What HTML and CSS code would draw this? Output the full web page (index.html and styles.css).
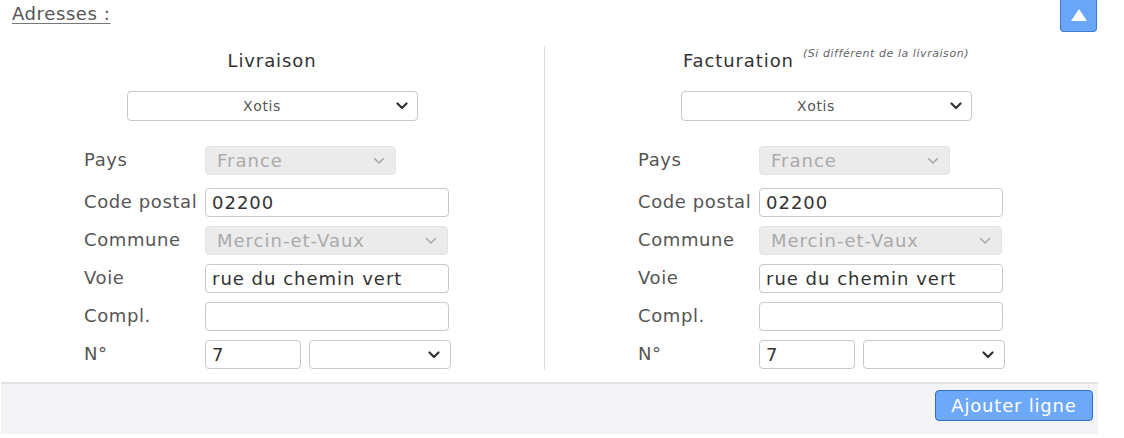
FILE: index.html
```html
<!DOCTYPE html>
<html lang="fr">
<head>
<meta charset="utf-8">
<title>Adresses</title>
<link rel="stylesheet" href="styles.css">
</head>
<body>
<div class="panel">
  <div class="head">
    <span class="head-title">Adresses :</span>
    <button class="toggle" type="button" aria-label="Replier"><span class="tri"></span></button>
  </div>
  <div class="cols">
    <div class="col">
      <div class="col-title"><span class="t">Livraison</span></div>
      <div class="picker"><span class="picker-val">Xotis</span><svg class="chev" viewBox="0 0 12 8"><path d="M1.5 1.5 L6 6 L10.5 1.5" /></svg></div>
      <div class="form">
        <div class="row"><span class="lbl">Pays</span><div class="sel dis w-pays"><span>France</span><svg class="chev light" viewBox="0 0 12 8"><path d="M1.5 1.5 L6 6 L10.5 1.5" /></svg></div></div>
        <div class="row"><span class="lbl">Code postal</span><div class="inp">02200</div></div>
        <div class="row"><span class="lbl">Commune</span><div class="sel dis w-full"><span>Mercin-et-Vaux</span><svg class="chev light" viewBox="0 0 12 8"><path d="M1.5 1.5 L6 6 L10.5 1.5" /></svg></div></div>
        <div class="row"><span class="lbl">Voie</span><div class="inp">rue du chemin vert</div></div>
        <div class="row"><span class="lbl">Compl.</span><div class="inp"></div></div>
        <div class="row"><span class="lbl">N°</span><div class="pair"><div class="inp num">7</div><div class="sel sfx"><span></span><svg class="chev" viewBox="0 0 12 8"><path d="M1.5 1.5 L6 6 L10.5 1.5" /></svg></div></div></div>
      </div>
    </div>
    <div class="col right">
      <div class="col-title"><span class="t">Facturation</span><span class="note">(Si différent de la livraison)</span></div>
      <div class="picker"><span class="picker-val">Xotis</span><svg class="chev" viewBox="0 0 12 8"><path d="M1.5 1.5 L6 6 L10.5 1.5" /></svg></div>
      <div class="form">
        <div class="row"><span class="lbl">Pays</span><div class="sel dis w-pays"><span>France</span><svg class="chev light" viewBox="0 0 12 8"><path d="M1.5 1.5 L6 6 L10.5 1.5" /></svg></div></div>
        <div class="row"><span class="lbl">Code postal</span><div class="inp">02200</div></div>
        <div class="row"><span class="lbl">Commune</span><div class="sel dis w-full"><span>Mercin-et-Vaux</span><svg class="chev light" viewBox="0 0 12 8"><path d="M1.5 1.5 L6 6 L10.5 1.5" /></svg></div></div>
        <div class="row"><span class="lbl">Voie</span><div class="inp">rue du chemin vert</div></div>
        <div class="row"><span class="lbl">Compl.</span><div class="inp"></div></div>
        <div class="row"><span class="lbl">N°</span><div class="pair"><div class="inp num">7</div><div class="sel sfx"><span></span><svg class="chev" viewBox="0 0 12 8"><path d="M1.5 1.5 L6 6 L10.5 1.5" /></svg></div></div></div>
      </div>
    </div>
  </div>
  <div class="foot">
    <button class="add" type="button">Ajouter ligne</button>
  </div>
</div>
</body>
</html>
```

FILE: styles.css
```css
* { box-sizing: border-box; }
html, body { margin: 0; padding: 0; background: #fff; }
body {
  font-family: "DejaVu Sans", "Open Sans", sans-serif;
  color: #444;
  width: 1124px;
  height: 438px;
  overflow: hidden;
}
.panel { width: 1098px; }
.head {
  display: flex;
  justify-content: space-between;
  align-items: flex-start;
  height: 46px;
}
.head-title {
  margin: 3px 0 0 12px;
  font-size: 18px;
  color: #555;
  text-decoration: underline;
  text-underline-offset: 3px;
  text-decoration-color: #777;
  letter-spacing: 0.6px;
}
.toggle {
  width: 37px;
  height: 32px;
  margin-right: 1px;
  border: 1px solid #3d7ad2;
  border-top: none;
  border-radius: 0 0 4px 4px;
  background: #6aa6f7;
  padding: 0;
  display: flex;
  align-items: center;
  justify-content: center;
}
.tri {
  width: 0; height: 0;
  border-left: 8px solid transparent;
  border-right: 8px solid transparent;
  border-bottom: 12px solid #fff;
  margin-bottom: 2px;
}
.cols { display: flex; height: 324px; }
.col {
  width: 544px;
  display: flex;
  flex-direction: column;
  align-items: center;
}
.col.right {
  width: 554px;
  border-left: 1px solid #dcdcdc;
  padding-left: 9px;
}
.col-title {
  height: 30px;
  display: flex;
  align-items: flex-start;
  padding-top: 4px;
}
.col-title .t { font-size: 18px; color: #333; letter-spacing: 0.9px; }
.col-title .note {
  font-size: 11px;
  font-style: italic;
  color: #666;
  margin-left: 9px;
  margin-top: -3px;
  letter-spacing: 0.55px;
}
.picker {
  margin-top: 15px;
  width: 291px;
  height: 30px;
  border: 1px solid #c8c8c8;
  border-radius: 4px;
  position: relative;
  display: flex;
  align-items: center;
  justify-content: center;
  padding-right: 20px;
}
.picker-val { font-size: 14px; color: #555; letter-spacing: 0.6px; }
.picker .chev { position: absolute; right: 9px; top: 10px; }
.chev {
  width: 12px; height: 8px;
  fill: none;
  stroke: #333;
  stroke-width: 2.2;
  stroke-linecap: round;
  stroke-linejoin: round;
}
.chev.light { stroke: #aaa; stroke-width: 1.6; }
.form {
  align-self: stretch;
  margin-top: 25px;
  padding-left: 84px;
  display: flex;
  flex-direction: column;
  gap: 9px;
}
.row { display: flex; align-items: center; height: 29px; }
.row:first-child { margin-bottom: 4px; }
.lbl {
  width: 121px;
  font-size: 18px;
  color: #555;
  margin-top: -3px;
  white-space: nowrap;
  letter-spacing: 0.6px;
}
.inp, .sel {
  height: 29px;
  border: 1px solid #c8c8c8;
  border-radius: 4px;
  font-size: 18px;
  color: #333;
  padding: 0 6px;
  display: flex;
  align-items: center;
  letter-spacing: 1px;
  white-space: nowrap;
}
.inp { width: 244px; }
.sel { justify-content: space-between; padding-right: 10px; }
.sel.dis {
  background: #ebebeb;
  border-color: #e3e3e3;
  color: #aaa;
  padding-left: 11px;
}
.w-pays { width: 191px; }
.w-full { width: 243px; }
.pair { display: flex; gap: 8px; }
.inp.num { width: 96px; }
.sel.sfx { width: 142px; }
.foot {
  margin-top: 12px;
  margin-left: 1px;
  border-top: 2px solid #e2e2e4;
  background: #f4f4f6;
  height: 52px;
  display: flex;
  justify-content: flex-end;
  align-items: flex-start;
  padding: 6px 5px 0 0;
}
.add {
  font-family: inherit;
  font-size: 18px;
  color: #fff;
  background: #6ea8f8;
  border: 1px solid #2f6fc8;
  border-radius: 4px;
  height: 31px;
  width: 158px;
  padding: 0;
  letter-spacing: 0.8px;
}
```
